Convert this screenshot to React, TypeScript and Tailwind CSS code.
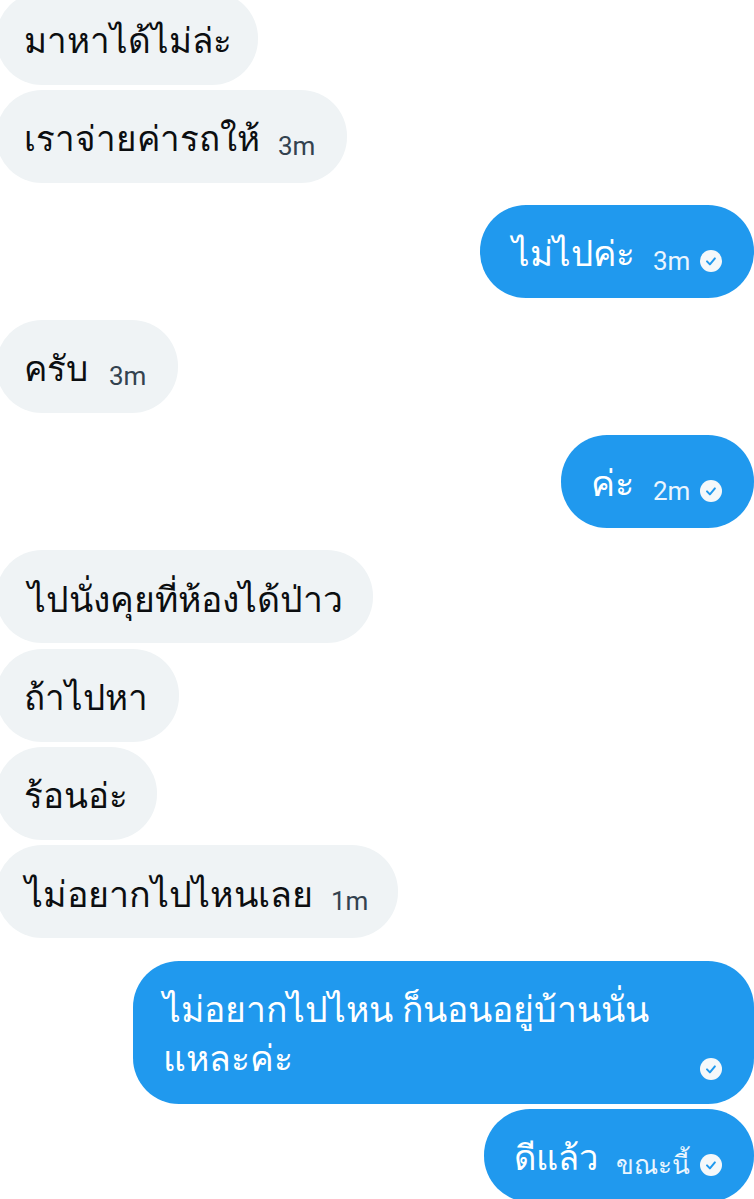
function Check() {
  return (
    <svg viewBox="0 0 22 22" className="w-[22px] h-[22px] shrink-0">
      <circle cx="11" cy="11" r="11" fill="#f5f8fa" />
      <path d="M7 11.4l2.9 3 5-6" fill="none" stroke="#2099ee" strokeWidth="2" strokeLinecap="round" strokeLinejoin="round" />
    </svg>
  );
}

function Time({ label, color }: { label: string; color: string }) {
  return (
    <span className={`ml-[18px] mt-[18px] font-['Roboto',sans-serif] text-[26px] leading-none whitespace-nowrap ${color}`}>
      {label}
    </span>
  );
}

function Incoming({ text, time, mt, width, textClass }: { text: string; time?: string; mt: string; width: string; textClass?: string }) {
  return (
    <div className={`flex ${mt}`}>
      <div className={`${width} -ml-[4px] h-[93px] rounded-[46px] bg-[#eff3f5] flex items-center pl-[28px]`}>
        <span className={`mt-[3px] leading-[48px] text-[#0c0e10] whitespace-nowrap ${textClass ?? "text-[35px]"}`}>{text}</span>
        {time && <Time label={time} color="text-[#33424f]" />}
      </div>
    </div>
  );
}

function Outgoing({ text, time, mt, width, textClass }: { text: string; time: string; mt: string; width: string; textClass?: string }) {
  return (
    <div className={`flex justify-end ${mt}`}>
      <div className={`${width} h-[93px] rounded-[46px] bg-[#2099ee] flex items-center pl-[30px] text-white`}>
        <span className={`mt-[3px] leading-[48px] whitespace-nowrap ${textClass ?? "text-[35px]"}`}>{text}</span>
        <Time label={time} color="text-[#eaf5fe]" />
        <span className="ml-[10px] mt-[19px]"><Check /></span>
      </div>
    </div>
  );
}

export default function App() {
  return (
    <div className="w-[754px] h-[1199px] overflow-hidden bg-white font-['Noto_Sans','DejaVu_Sans',sans-serif]">
      <div className="-mt-[8px]">
        <Incoming text="มาหาได้ไม่ล่ะ" mt="" width="w-[262px]" />
        <Incoming text="เราจ่ายค่ารถให้" time="3m" mt="mt-[5px]" width="w-[351px]" />
        <Outgoing text="ไม่ไปค่ะ" time="3m" mt="mt-[22px]" width="w-[274px]" textClass="text-[35px] ml-[2px]" />
        <Incoming text="ครับ" time="3m" mt="mt-[22px]" width="w-[182px]" textClass="text-[35px] mr-[3px]" />
        <Outgoing text="ค่ะ" time="2m" mt="mt-[22px]" width="w-[193px]" textClass="text-[36px] mr-[1px]" />
        <Incoming text="ไปนั่งคุยที่ห้องได้ป่าว" mt="mt-[22px]" width="w-[377px]" textClass="text-[35.5px] ml-[4px]" />
        <Incoming text="ถ้าไปหา" mt="mt-[6px]" width="w-[183px]" />
        <Incoming text="ร้อนอ่ะ" mt="mt-[5px]" width="w-[161px]" />
        <Incoming text="ไม่อยากไปไหนเลย" time="1m" mt="mt-[5px]" width="w-[402px]" textClass="text-[35.8px] ml-[1px]" />
        <div className="flex justify-end mt-[23px]">
          <div className="relative w-[621px] h-[143px] rounded-[46px] bg-[#2099ee] pl-[30px] pt-[23px] text-white">
            <p className="text-[35.5px] leading-[49px] whitespace-nowrap">
              ไม่อยากไปไหน ก็นอนอยู่บ้านนั่น
              <br />
              แหละค่ะ
            </p>
            <span className="absolute right-[32px] bottom-[24px]"><Check /></span>
          </div>
        </div>
        <Outgoing text="ดีแล้ว" time="ขณะนี้" mt="mt-[5px]" width="w-[270px]" textClass="text-[34.5px]" />
      </div>
    </div>
  );
}
